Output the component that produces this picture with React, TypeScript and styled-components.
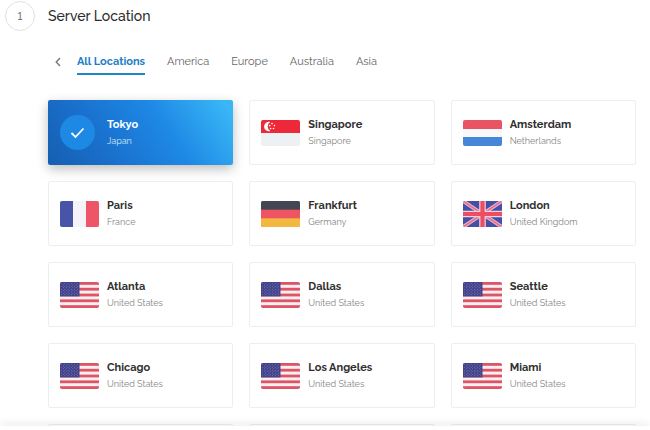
import React, { useState } from 'react';
import styled, { createGlobalStyle, css } from 'styled-components';

const GlobalStyle = createGlobalStyle`
  *, *::before, *::after { box-sizing: border-box; }
  body {
    margin: 0;
    background: #fff;
    color: #333;
    font-family: Raleway, Lato, sans-serif;
  }
  button { font-family: inherit; }
`;

const Page = styled.div`
  display: flex;
  flex-direction: column;
  height: 100vh;
`;

const Content = styled.main`
  flex: 1;
  min-height: 0;
  overflow: hidden;
  padding: 1px 14px 0 5px;
`;

const StepHeader = styled.header`
  display: flex;
  align-items: center;
  gap: 13px;
`;

const StepNumber = styled.span`
  display: flex;
  align-items: center;
  justify-content: center;
  width: 30px;
  height: 30px;
  border: 1px solid #d9e3e6;
  border-radius: 50%;
  color: #777;
  font-size: 11px;
  font-weight: 500;
  font-variant-numeric: lining-nums;
`;

const StepTitle = styled.h2`
  margin: 0;
  font-size: 14px;
  font-weight: 500;
  line-height: 20px;
  color: #2b2b2b;
`;

const StepBody = styled.div`
  padding: 20px 0 0 43px;
`;

const TabBar = styled.nav`
  display: flex;
  align-items: center;
  gap: 22px;
  padding-left: 4px;
  margin-bottom: 25px;
`;

const BackButton = styled.button`
  display: flex;
  align-items: center;
  justify-content: center;
  width: 12px;
  height: 24px;
  margin-right: -9px;
  padding: 0 0 2px;
  border: 0;
  background: none;
  color: #777;
  cursor: pointer;
`;

const Tab = styled.button<{ $active: boolean }>`
  height: 24px;
  padding: 0;
  border: 0;
  border-bottom: 2px solid transparent;
  background: none;
  color: #666;
  font-size: 11px;
  line-height: 22px;
  cursor: pointer;
  ${({ $active }) =>
    $active &&
    css`
      border-bottom-color: #2187c4;
      color: #1b7fc4;
      font-weight: 700;
    `}
`;

const LocationGrid = styled.div`
  display: grid;
  grid-template-columns: repeat(3, 1fr);
  grid-auto-rows: 65px;
  gap: 16px;
`;

const Country = styled.span`
  color: #858585;
  font-size: 9px;
  line-height: 17px;
`;

const City = styled.span`
  color: #2f2f2f;
  font-size: 11px;
  font-weight: 700;
  line-height: 17px;
`;

const Card = styled.button<{ $selected?: boolean }>`
  display: flex;
  align-items: center;
  gap: 8px;
  padding: 0 11px;
  border: 1px solid #eceff1;
  border-radius: 2px;
  background: #fff;
  text-align: left;
  cursor: pointer;
  ${({ $selected }) =>
    $selected &&
    css`
      border-color: transparent;
      background: linear-gradient(55deg, #155fb0 0%, #1a70cd 30%, #1e88e5 62%, #38b6f5 95%) border-box;
      box-shadow: 0 4px 12px rgba(0, 0, 0, 0.26);
      ${City} { color: #fff; }
      ${Country} { color: #d5e9fb; }
    `}
`;

const CardText = styled.span`
  display: flex;
  flex-direction: column;
`;

const Marker = styled.span`
  display: flex;
  width: 39px;
`;

const CheckDisc = styled.span`
  display: flex;
  align-items: center;
  justify-content: center;
  width: 35px;
  height: 35px;
  border-radius: 50%;
  background: #1e88e5;
`;

const FlagSvg = styled.svg`
  display: block;
  width: 39px;
  height: 26px;
  border-radius: 2px;
`;

const Footer = styled.footer`
  position: relative;
  height: 4px;
  background: #fff;
  box-shadow: 0 -1px 10px rgba(0, 0, 0, 0.14);
`;

type Code = 'jp' | 'sg' | 'nl' | 'fr' | 'de' | 'gb' | 'us';

const starRows = Array.from({ length: 9 }, (_, r) =>
  Array.from({ length: r % 2 ? 5 : 6 }, (_, c) => ({
    x: 1.7 + c * 3.2 + (r % 2 ? 1.6 : 0),
    y: 1.6 + r * 1.4,
  })),
).flat();

const flagArt: Record<Code, React.ReactNode> = {
  jp: (
    <>
      <rect width="39" height="26" fill="#f5f5f5" />
      <circle cx="19.5" cy="13" r="7.5" fill="#ef5363" />
    </>
  ),
  sg: (
    <>
      <rect width="39" height="26" fill="#eef1f4" />
      <rect width="39" height="13" fill="#ed2939" />
      <path d="M9.4 2.1a4.7 4.7 0 1 0 0 8.8 4.9 4.9 0 0 1 0-8.8z" fill="#fff" />
      <g fill="#fff">
        <circle cx="11" cy="3.6" r="0.8" />
        <circle cx="8.7" cy="5.6" r="0.8" />
        <circle cx="13.4" cy="5.6" r="0.8" />
        <circle cx="9.6" cy="8.5" r="0.8" />
        <circle cx="12.5" cy="8.5" r="0.8" />
      </g>
    </>
  ),
  nl: (
    <>
      <rect width="39" height="26" fill="#f8f8fa" />
      <rect width="39" height="9" fill="#ea5364" />
      <rect y="17" width="39" height="9" fill="#4785d8" />
    </>
  ),
  fr: (
    <>
      <rect width="39" height="26" fill="#f4f4f8" />
      <rect width="13" height="26" fill="#4854a5" />
      <rect x="26" width="13" height="26" fill="#ee5566" />
    </>
  ),
  de: (
    <>
      <rect width="39" height="26" fill="#ef5462" />
      <rect width="39" height="8.7" fill="#444753" />
      <rect y="17.3" width="39" height="8.7" fill="#f3b83f" />
    </>
  ),
  gb: (
    <>
      <rect width="39" height="26" fill="#464fa6" />
      <path d="M0 0L39 26M39 0L0 26" stroke="#e3bcd6" strokeWidth="3.6" />
      <path d="M0 0L39 26M39 0L0 26" stroke="#ee6a84" strokeWidth="1.6" />
      <path d="M19.5 0V26M0 13H39" stroke="#f5cfdb" strokeWidth="6.6" />
      <path d="M19.5 0V26M0 13H39" stroke="#ec4d63" strokeWidth="4.2" />
    </>
  ),
  us: (
    <>
      <rect width="39" height="26" fill="#f9eef0" />
      {[0, 5.8, 11.6, 17.4, 23.2].map((y) => (
        <rect key={y} y={y} width="39" height="2.8" fill="#dc5466" />
      ))}
      <rect width="19.5" height="14.4" fill="#43438c" />
      {starRows.map(({ x, y }) => (
        <circle key={`${x}-${y}`} cx={x} cy={y} r="0.45" fill="#9d9dca" />
      ))}
    </>
  ),
};

const Flag = ({ code }: { code: Code }) => (
  <FlagSvg viewBox="0 0 39 26" aria-hidden="true">
    {flagArt[code]}
  </FlagSvg>
);

const CheckMark = () => (
  <CheckDisc>
    <svg width="15" height="12" viewBox="0 0 15 12" fill="none" aria-hidden="true">
      <path d="M1.5 6l4 4L13.5 1.5" stroke="#fff" strokeWidth="1.8" />
    </svg>
  </CheckDisc>
);

const tabs = ['All Locations', 'America', 'Europe', 'Australia', 'Asia'];

const locations: { city: string; country: string; code: Code }[] = [
  { city: 'Tokyo', country: 'Japan', code: 'jp' },
  { city: 'Singapore', country: 'Singapore', code: 'sg' },
  { city: 'Amsterdam', country: 'Netherlands', code: 'nl' },
  { city: 'Paris', country: 'France', code: 'fr' },
  { city: 'Frankfurt', country: 'Germany', code: 'de' },
  { city: 'London', country: 'United Kingdom', code: 'gb' },
  { city: 'Atlanta', country: 'United States', code: 'us' },
  { city: 'Dallas', country: 'United States', code: 'us' },
  { city: 'Seattle', country: 'United States', code: 'us' },
  { city: 'Chicago', country: 'United States', code: 'us' },
  { city: 'Los Angeles', country: 'United States', code: 'us' },
  { city: 'Miami', country: 'United States', code: 'us' },
];

const PlaceholderCard = styled.div`
  border: 1px solid #eceff1;
  border-radius: 2px;
`;

export default function App() {
  const [tab, setTab] = useState('All Locations');
  const [selected, setSelected] = useState('Tokyo');

  return (
    <Page>
      <GlobalStyle />
      <Content>
        <StepHeader>
          <StepNumber>1</StepNumber>
          <StepTitle>Server Location</StepTitle>
        </StepHeader>
        <StepBody>
          <TabBar>
            <BackButton aria-label="Previous">
              <svg width="6" height="10" viewBox="0 0 6 10" fill="none" aria-hidden="true">
                <path d="M5 1L1.2 5L5 9" stroke="currentColor" strokeWidth="1.4" />
              </svg>
            </BackButton>
            {tabs.map((name) => (
              <Tab key={name} $active={name === tab} onClick={() => setTab(name)}>
                {name}
              </Tab>
            ))}
          </TabBar>
          <LocationGrid>
            {locations.map(({ city, country, code }) => (
              <Card
                key={city}
                $selected={city === selected}
                aria-pressed={city === selected}
                onClick={() => setSelected(city)}
              >
                <Marker>{city === selected ? <CheckMark /> : <Flag code={code} />}</Marker>
                <CardText>
                  <City>{city}</City>
                  <Country>{country}</Country>
                </CardText>
              </Card>
            ))}
            <PlaceholderCard />
            <PlaceholderCard />
            <PlaceholderCard />
          </LocationGrid>
        </StepBody>
      </Content>
      <Footer />
    </Page>
  );
}
